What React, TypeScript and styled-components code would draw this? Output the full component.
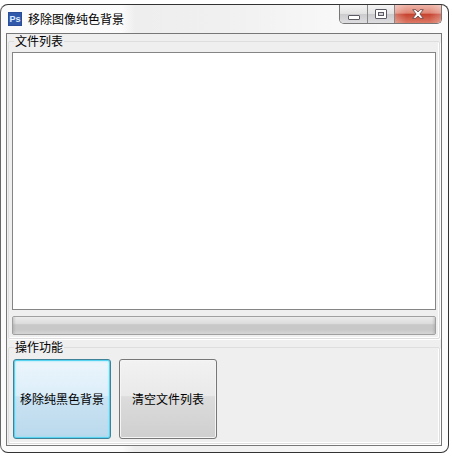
import React from "react";
import styled, { createGlobalStyle, css } from "styled-components";

const GlobalStyle = createGlobalStyle`
  *, *::before, *::after { box-sizing: border-box; }
  body {
    margin: 0;
    background: #fff;
    color: #000;
    font: 12px/14px "Noto Sans CJK SC", sans-serif;
  }
  button { font: inherit; color: inherit; }
`;

const Desktop = styled.div`
  display: flex;
  height: 100vh;
  padding: 4px 3px 3px 0;
`;

const Window = styled.main`
  flex: 1;
  display: flex;
  flex-direction: column;
  min-width: 0;
  padding: 0 6px 6px 5px;
  border: 1px solid #333;
  border-left-color: #666;
  border-radius: 8px;
  background: linear-gradient(90deg, #fbfbfb 0, #fbfbfb 27%, #eeeeee 30%, #f0f0f0 50%, #f8f8f8 75%, #fcfcfc 100%);
`;

const TitleBar = styled.header`
  display: flex;
  align-items: flex-start;
  height: 28px;
  flex: none;
`;

const Title = styled.h1`
  flex: 1;
  display: flex;
  align-items: center;
  gap: 6px;
  height: 28px;
  margin: 0;
  padding-left: 2px;
  font-size: 12px;
  font-weight: 400;
  white-space: nowrap;
`;

const Controls = styled.div`
  display: flex;
  height: 19px;
  border: 1px solid #777;
  border-top: 0;
  border-radius: 0 0 5px 5px;
  overflow: hidden;
`;

const kinds = {
  minimize: css`
    width: 28px;
  `,
  maximize: css`
    width: 27px;
  `,
  close: css`
    width: 46px;
    border-right: 0;
    background: linear-gradient(90deg, #ffffff44, transparent 25%, transparent 75%, #ffffff44),
      linear-gradient(#eeb5a8, #df8472 46%, #c5402c 50%, #dc7a66);
  `,
};

const ControlButton = styled.button<{ $kind: keyof typeof kinds }>`
  display: grid;
  place-items: center;
  padding: 0;
  border: 0;
  border-right: 1px solid #888;
  background: linear-gradient(#f4f4f4, #e2e2e2 48%, #cbcbcd 52%, #dedee0);
  ${(p) => kinds[p.$kind]}
`;

const Client = styled.div`
  flex: 1;
  display: flex;
  flex-direction: column;
  gap: 1px;
  min-height: 0;
  padding: 0 1px 1px;
  border: 1px solid #777;
  background: #efefef;
`;

const Group = styled.fieldset<{ $grow?: boolean }>`
  flex: ${(p) => (p.$grow ? "1" : "none")};
  min-width: 0;
  min-height: 0;
  margin: 0;
  padding: 4px 3px ${(p) => (p.$grow ? "3px" : "4px")};
  border: 1px solid #dedede;
  border-radius: 2px;
  box-shadow: inset -1px -1px #fff, 1px 1px #fff;
`;

const Legend = styled.legend`
  height: 14px;
  margin-left: 2px;
  padding: 0 1px;
`;

const Stack = styled.div`
  display: flex;
  flex-direction: column;
  gap: 6px;
  height: 100%;
`;

const FileList = styled.ul`
  flex: 1;
  min-height: 0;
  margin: 0;
  padding: 0;
  list-style: none;
  overflow: auto;
  border: 1px solid #858585;
  background: #fff;
`;

const trackFill = "linear-gradient(#ececec 0, #dcdcdc 38%, #c8c8c8 46%, #c8c8c8 75%, #d6d6d6 100%)";

const Progress = styled.progress`
  appearance: none;
  display: block;
  width: 100%;
  height: 19px;
  border: 1px solid #a0a0a0;
  border-radius: 2px;
  background: ${trackFill};
  &::-webkit-progress-bar {
    background: linear-gradient(90deg, #99999966, transparent 3px, transparent calc(100% - 3px), #99999966),
      ${trackFill};
  }
`;

const Actions = styled.div`
  display: flex;
  gap: 8px;
  padding: 1px 1px 0;
`;

const ActionButton = styled.button<{ $primary?: boolean }>`
  width: 98px;
  height: 80px;
  padding: 0;
  border: 1px solid #777;
  border-radius: 3px;
  background: linear-gradient(#f2f2f2, #e9e9e9 46%, #dcdcdc 47%, #cfcfcf);
  box-shadow: inset 0 0 0 1px #f5f5f5;
  white-space: nowrap;
  ${(p) =>
    p.$primary &&
    css`
      border-color: #3f8298;
      background: linear-gradient(#ecf5fb, #dceefa 46%, #cbe3f3 47%, #b9d9ec);
      box-shadow: inset 0 0 0 1px #55d3f0, inset 0 0 2px 1px #7de0f5;
    `}
`;

const AppIcon = () => (
  <svg width="14" height="14" viewBox="0 0 14 14" aria-hidden="true">
    <rect width="14" height="14" fill="#2b4c96" />
    <rect x="1" y="1" width="12" height="12" fill="#3159ab" />
    <text
      x="7"
      y="10"
      textAnchor="middle"
      fill="#dcebff"
      fontFamily='"Liberation Sans", sans-serif'
      fontSize="9"
      fontWeight="700"
    >
      Ps
    </text>
  </svg>
);

const MinimizeIcon = () => (
  <svg width="12" height="13" viewBox="0 0 12 13" aria-hidden="true">
    <rect x="0.5" y="7.500" width="11" height="4" rx="0.5" fill="#fff" stroke="#5b5b66" />
  </svg>
);

const MaximizeIcon = () => (
  <svg width="12" height="10" viewBox="0 0 12 10" aria-hidden="true">
    <rect x="0.5" y="0.5" width="11" height="9" rx="0.5" fill="#fff" stroke="#5b5b66" />
    <rect x="3.500" y="3.500" width="5" height="3" fill="#d5d5d8" stroke="#5b5b66" />
  </svg>
);

const CloseIcon = () => (
  <svg width="12" height="10" viewBox="0 0 12 10" aria-hidden="true">
    <path
      d="M.7.7h3.200L6 3 8.100.7h3.200L7.900 5l3.400 4.300H8.100L6 7 3.900 9.300H.7L4.100 5z"
      fill="#fff"
      stroke="#6b4a4a"
      strokeWidth="0.9"
    />
  </svg>
);

export default function App() {
  return (
    <Desktop>
      <GlobalStyle />
      <Window>
        <TitleBar>
          <Title>
            <AppIcon />
            移除图像纯色背景
          </Title>
          <Controls>
            <ControlButton type="button" $kind="minimize" aria-label="最小化">
              <MinimizeIcon />
            </ControlButton>
            <ControlButton type="button" $kind="maximize" aria-label="最大化">
              <MaximizeIcon />
            </ControlButton>
            <ControlButton type="button" $kind="close" aria-label="关闭">
              <CloseIcon />
            </ControlButton>
          </Controls>
        </TitleBar>
        <Client>
          <Group $grow>
            <Legend>文件列表</Legend>
            <Stack>
              <FileList aria-label="文件列表" />
              <Progress value={0} max={100} aria-label="进度" />
            </Stack>
          </Group>
          <Group>
            <Legend>操作功能</Legend>
            <Actions>
              <ActionButton type="button" $primary>
                移除纯黑色背景
              </ActionButton>
              <ActionButton type="button">清空文件列表</ActionButton>
            </Actions>
          </Group>
        </Client>
      </Window>
    </Desktop>
  );
}
